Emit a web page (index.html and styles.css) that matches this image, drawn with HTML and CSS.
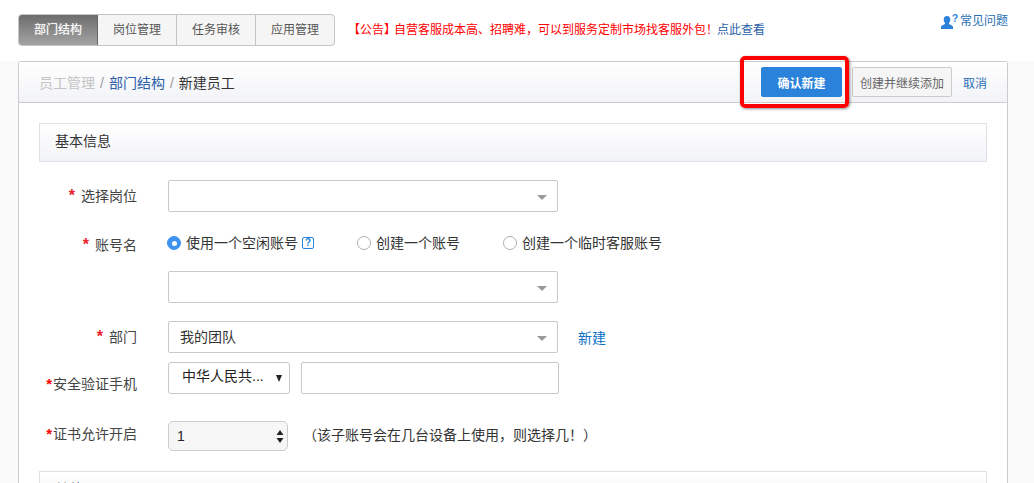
FILE: index.html
```html
<!DOCTYPE html>
<html lang="zh">
<head>
<meta charset="utf-8">
<title>新建员工</title>
<link rel="stylesheet" href="styles.css">
</head>
<body>
<header class="topbar">
  <nav class="tabs">
    <a class="tab active">部门结构</a>
    <a class="tab">岗位管理</a>
    <a class="tab">任务审核</a>
    <a class="tab">应用管理</a>
  </nav>
  <p class="notice"><span class="notice-tag">【公告】</span>自营客服成本高、招聘难，可以到服务定制市场找客服外包！<a class="notice-link">点此查看</a></p>
  <a class="faq">
    <svg class="faq-icon" viewBox="0 0 17 15" width="17" height="15"><path fill="#2a82da" d="M6 2c2.200 0 3.300 1.700 3.300 3.600 0 1.400-.5 2.600-1.300 3.400v1.100l3 1.500c.6.300 1 .9 1 1.600V15H0v-1.800c0-.7.400-1.300 1-1.600l3-1.500V9C3.200 8.200 2.700 7 2.700 5.600 2.700 3.700 3.800 2 6 2z"/><text x="11" y="8" class="faq-q">?</text></svg>
    <span>常见问题</span>
  </a>
</header>
<main class="panel-wrap">
  <section class="panel">
    <div class="panel-head">
      <div class="crumbs"><span class="crumb-muted">员工管理</span><span class="sep">/</span><a class="crumb-link">部门结构</a><span class="sep">/</span><span>新建员工</span></div>
      <div class="actions">
        <button class="btn btn-primary">确认新建</button>
        <button class="btn btn-default">创建并继续添加</button>
        <a class="cancel">取消</a>
        <span class="highlight"></span>
      </div>
    </div>
    <div class="panel-body">
      <div class="section-title">基本信息</div>
      <form class="form">
        <div class="row row-post">
          <label class="label"><i class="star">*</i>选择岗位</label>
          <div class="select"><span class="caret"></span></div>
        </div>
        <div class="row row-account">
          <label class="label"><i class="star">*</i>账号名</label>
          <div class="radios">
            <span class="radio-item r1"><span class="radio on"></span>使用一个空闲账号<span class="help">?</span></span>
            <span class="radio-item r2"><span class="radio"></span>创建一个账号</span>
            <span class="radio-item"><span class="radio"></span>创建一个临时客服账号</span>
          </div>
        </div>
        <div class="row row-account2">
          <span class="label"></span>
          <div class="select"><span class="caret"></span></div>
        </div>
        <div class="row row-dept">
          <label class="label"><i class="star">*</i>部门</label>
          <div class="select"><span class="value">我的团队</span><span class="caret"></span></div>
          <a class="new-link">新建</a>
        </div>
        <div class="row row-phone">
          <label class="label label-tight"><i class="star-tight">*</i>安全验证手机</label>
          <div class="country"><span>中华人民共...</span><span class="native-caret"></span></div>
          <div class="phone"></div>
        </div>
        <div class="row row-cert">
          <label class="label label-tight"><i class="star-tight">*</i>证书允许开启</label>
          <div class="stepper"><span>1</span>
            <svg class="updown" viewBox="0 0 8 13" width="8" height="13"><path fill="#222" d="M4 0l3.500 5H.5zM4 13L.5 8h7z"/></svg>
          </div>
          <span class="hint">（该子账号会在几台设备上使用，则选择几！）</span>
        </div>
      </form>
      <div class="section-title section-next">其他</div>
    </div>
  </section>
</main>
</body>
</html>
```
FILE: styles.css
```css
* { box-sizing: border-box; }
html, body { margin: 0; height: 483px; overflow: hidden; }
body {
  background: #fff;
  font-family: "Liberation Sans", "Noto Sans CJK SC", sans-serif;
  font-size: 13px;
  color: #333;
}
a { text-decoration: none; }

.topbar { height: 61px; padding: 14px 0 0 18px; display: flex; align-items: flex-start; position: relative; }
.tabs {
  display: flex; height: 32px; width: 317px;
  border: 1px solid #c4c4c4; border-radius: 4px; background: #f5f5f5; overflow: hidden;
}
.tab {
  width: 79px; line-height: 30px; text-align: center; color: #555; font-size: 12px;
  border-right: 1px solid #c4c4c4;
}
.tab:last-child { border-right: 0; flex: 1; }
.tab.active {
  background: linear-gradient(#6d6d6d, #a3a3a3); color: #fff; border-right-color: #666;
  text-shadow: 0 0 1px rgba(255,255,255,.6);
}
.notice { margin: 0 0 0 13px; line-height: 32px; font-size: 12px; color: #f00; white-space: nowrap; }
.notice-tag { margin-right: -2px; }
.notice-link { color: #2a5ea8; margin-left: -1px; }
.faq { position: absolute; left: 941px; top: 13px; display: flex; align-items: center; gap: 2px; color: #2a6fb5; font-size: 12px; line-height: 17px; }
.faq-icon { display: block; overflow: visible; }
.faq-q { font: bold 10px "Liberation Sans", sans-serif; fill: #2a82da; }

.panel-wrap { height: 422px; padding: 0 26px 0 18px; background: #fafafa; }
.panel {
  height: 422px; border: 1px solid #ccc; border-bottom: 0; border-radius: 3px 3px 0 0; background: #fff;
}
.panel-head {
  height: 41px; display: flex; align-items: center; justify-content: space-between;
  padding: 0 20px; border-bottom: 1px solid #ccc;
  background: linear-gradient(#fff, #f2f3f7);
}
.crumbs { font-size: 14px; color: #333; display: flex; align-items: baseline; }
.crumb-muted { color: #c4c4c4; }
.crumb-link { color: #2a5ea8; }
.sep { color: #999; margin: 0 5px; }
.actions { display: flex; align-items: center; position: relative; }
.btn { font-family: inherit; font-size: 12px; height: 30px; padding: 0; border-radius: 2px; }
.btn-primary { width: 81px; background: #2a82da; border: 1px solid #2a82da; color: #fff; font-weight: bold; }
.btn-default { width: 100px; margin-left: 10px; background: #f5f5f5; border: 1px solid #ccc; color: #666; }
.cancel { margin: 0 0 0 11px; width: 24px; color: #2a6fb5; font-size: 12px; white-space: nowrap; }
.highlight {
  position: absolute; left: -21px; top: -11px; width: 109px; height: 52px;
  border: 4px solid #f00; border-radius: 5px; box-shadow: 1px 1px 3px rgba(0,0,0,.45);
  pointer-events: none;
}

.panel-body { height: 380px; overflow: hidden; padding: 20px 20px 0; }
.section-title {
  height: 39px; line-height: 35px; padding-left: 15px; font-size: 14px; color: #333;
  border: 1px solid #dfe1e8; background: linear-gradient(#fff, #f2f3f7);
}
.form { display: block; }
.row { display: flex; align-items: flex-start; }
.label { width: 98px; flex: none; text-align: right; font-size: 14px; color: #444; }
.star { color: #e8232a; font-style: normal; font-size: 16px; font-weight: bold; margin-right: 6px; }
.star-tight { color: #f00; font-style: normal; font-size: 15px; font-weight: bold; margin-right: 1px; }
.select {
  width: 390px; height: 32px; margin-left: 31px; position: relative;
  border: 1px solid #c8c8c8; border-radius: 2px; padding-left: 11px;
  line-height: 30px; font-size: 14px; color: #333; background: #fff;
}
.caret {
  position: absolute; right: 10px; top: 14px; width: 0; height: 0;
  border: 5px solid transparent; border-top: 5px solid #999; border-bottom: 0;
}
.row-post { margin-top: 18px; height: 32px; }
.row-post .label, .row-dept .label { line-height: 32px; }
.row-account { margin-top: 20px; height: 27px; }
.row-account .label { padding-top: 2px; }
.radios { margin-left: 30px; display: flex; font-size: 14px; color: #333; line-height: 22px; }
.radio-item { display: flex; align-items: center; }
.r1 { width: 190px; }
.r2 { width: 146px; }
.radio {
  width: 14px; height: 14px; margin-right: 5px; border: 1px solid #b0b0b0; border-radius: 50%; background: #fff; flex: none;
}
.radio.on { background: #3d94f0; border-color: #3d94f0; position: relative; }
.radio.on::after {
  content: ""; position: absolute; left: 3.500px; top: 3.500px; width: 5px; height: 5px; border-radius: 50%; background: #fff;
}
.help {
  width: 12px; height: 12px; margin-left: 4px; border: 1px solid #2a82da; border-radius: 2px;
  color: #2a82da; font-size: 10px; font-weight: bold; line-height: 10px; text-align: center;
}
.row-account2 { margin-top: 12px; height: 32px; }
.row-dept { margin-top: 18px; height: 32px; }
.new-link { margin-left: 20px; line-height: 34px; font-size: 14px; color: #0b72c8; }
.row-phone { margin-top: 9px; height: 32px; }
.label-tight { line-height: 44px; }
.country {
  width: 122px; height: 32px; margin-left: 31px; border: 1px solid #c8c8c8; border-radius: 3px; padding-left: 13px;
  display: flex; justify-content: space-between; font-size: 14px; line-height: 27px; color: #222; background: #fff;
}
.native-caret {
  width: 0; height: 0; margin: 12px 7px 0 0;
  border-left: 3.500px solid transparent; border-right: 3.500px solid transparent; border-top: 7px solid #222;
}
.phone { width: 258px; height: 32px; margin-left: 11px; border: 1px solid #c8c8c8; border-radius: 2px; }
.row-cert { margin-top: 27px; height: 32px; }
.row-cert .label-tight { line-height: 26px; }
.stepper {
  width: 120px; height: 30px; margin-left: 31px; border: 1px solid #ccc; border-radius: 5px; background: #f6f6f6;
  display: flex; align-items: center; justify-content: space-between; padding: 0 3px 0 8px; font-size: 14px; color: #222;
}
.updown { display: block; }
.hint { margin-left: 15px; font-size: 14px; line-height: 28px; color: #333; white-space: nowrap; }
.section-next { margin-top: 18px; }
```
